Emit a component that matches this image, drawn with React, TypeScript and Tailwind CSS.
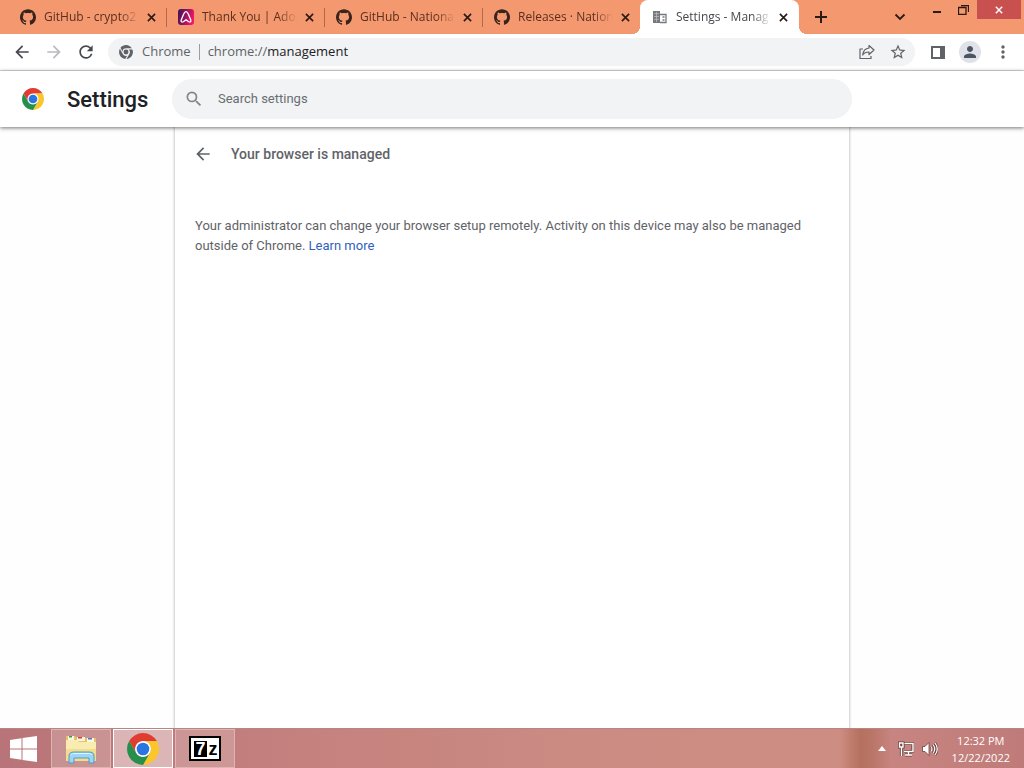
import type { ReactNode } from "react";
import {
  MdArrowBack,
  MdArrowForward,
  MdMoreVert,
  MdPerson,
  MdRefresh,
  MdSearch,
  MdStarBorder,
} from "react-icons/md";
import { SiGithub } from "react-icons/si";

type TabType = {
  title: string;
  icon: ReactNode;
  active?: boolean;
};

const ChromeLogo = ({ className }: { className: string }) => (
  <svg viewBox="0 0 48 48" className={className} aria-hidden="true">
    <circle cx="24" cy="24" r="12" fill="#fff" />
    <path
      fill="#e03c31"
      d="M24 12H44.78a24 24 0 0 0-41.56 0L13.61 30A12 12 0 0 1 24 12Z"
    />
    <path
      fill="#fbc62c"
      d="M34.39 30 24 48A24 24 0 0 0 44.78 12H24A12 12 0 0 1 34.39 30Z"
    />
    <path
      fill="#26904a"
      d="M13.61 30 3.22 12A24 24 0 0 0 24 48L34.39 30a12 12 0 0 1-20.78 0Z"
    />
    <circle cx="24" cy="24" r="9.5" fill="#2a74e4" />
  </svg>
);

const ChromeMonoLogo = () => (
  <svg
    viewBox="0 0 48 48"
    className="size-[14px] shrink-0"
    fill="#5f6368"
    aria-hidden="true"
  >
    <path d="M24 11H44A24 24 0 0 0 5 9.500L12 22A12.500 12.500 0 0 1 24 11Z" />
    <path d="M34 33 25.500 48A24 24 0 0 0 46 15H33A13 13 0 0 1 34 33Z" />
    <path d="M13 31 3 13A24 24 0 0 0 21 48L28 36.500A13 13 0 0 1 13 31Z" />
    <circle cx="24" cy="24" r="8.500" />
  </svg>
);

const AdoptiumIcon = () => (
  <svg viewBox="0 0 16 16" className="size-4" aria-hidden="true">
    <defs>
      <linearGradient id="adoptium" x1="0" y1="0" x2="1" y2="0.3">
        <stop offset="0" stopColor="#3c1150" />
        <stop offset="0.6" stopColor="#9c1560" />
        <stop offset="1" stopColor="#f01568" />
      </linearGradient>
    </defs>
    <rect width="16" height="16" rx="3" fill="url(#adoptium)" />
    <path
      d="M8 2.600c-1.300 0-1.700.9-2.200 2.200L3.200 11c-.6 1.600.7 2.600 2 1.800L8 10.900l2.800 1.900c1.300.8 2.600-.2 2-1.800l-2.600-6.200C9.700 3.500 9.300 2.600 8 2.600Z"
      fill="none"
      stroke="#fff"
      strokeWidth="1.300"
    />
  </svg>
);

const BuildingIcon = () => (
  <svg viewBox="0 0 16 16" className="size-4" aria-hidden="true">
    <path fill="#75787c" d="M1 2h7v12H1z" />
    <path
      d="M8 5.500h6v8H8M10.500 8h2M10.500 11h2"
      fill="none"
      stroke="#75787c"
      strokeWidth="1.300"
    />
    <path
      d="M2 4.700h5M2 7.500h5M2 10.300h5M4.500 3v10"
      stroke="#b9bbbe"
      strokeWidth="0.800"
    />
  </svg>
);

const CloseIcon = ({ className }: { className: string }) => (
  <svg viewBox="0 0 10 10" className={className} aria-hidden="true">
    <path d="M1 1 9 9M9 1 1 9" stroke="currentColor" strokeWidth="1.800" />
  </svg>
);

const tabs: TabType[] = [
  {
    title: "GitHub - crypto2",
    icon: <SiGithub className="size-4 text-[#3a231b]" />,
  },
  { title: "Thank You | Adop", icon: <AdoptiumIcon /> },
  {
    title: "GitHub - National",
    icon: <SiGithub className="size-4 text-[#3a231b]" />,
  },
  {
    title: "Releases · Nation",
    icon: <SiGithub className="size-4 text-[#3a231b]" />,
  },
  {
    title: "Settings - Manag",
    icon: <BuildingIcon />,
    active: true,
  },
];

const Tab = ({ tab, divider }: { tab: TabType; divider: boolean }) => (
  <div
    className={
      tab.active
        ? "relative flex h-full w-[159px] min-w-0 items-center rounded-t-lg bg-white pl-3 text-[#45484c] before:absolute before:bottom-0 before:-left-2 before:size-2 before:bg-[radial-gradient(circle_at_0_0,transparent_8px,white_8px)] after:absolute after:-right-2 after:bottom-0 after:size-2 after:bg-[radial-gradient(circle_at_100%_0,transparent_8px,white_8px)]"
        : "relative flex h-full w-[158px] min-w-0 items-center pl-3 text-[#5a2f1d]"
    }
  >
    <button
      role="tab"
      aria-selected={!!tab.active}
      className="flex min-w-0 items-center gap-2"
    >
      <span className="shrink-0">{tab.icon}</span>
      <span className="w-[95px] overflow-hidden text-left text-xs whitespace-nowrap [mask-image:linear-gradient(to_right,black_80%,transparent)]">
        {tab.title}
      </span>
    </button>
    <button
      aria-label={`Close ${tab.title}`}
      className="ml-1 flex size-4 shrink-0 items-center justify-center text-[#2b1a14]"
    >
      <CloseIcon className="size-[9px]" />
    </button>
    {divider && (
      <span className="absolute top-2 -right-px h-[19px] w-px bg-[#b0694b]" />
    )}
  </div>
);

const TabStrip = () => (
  <div className="flex h-[34px] shrink-0 bg-[#f49870] pl-2">
    <div role="tablist" className="flex min-w-0">
      {tabs.map((tab, index) => (
        <Tab tab={tab} divider={index < 3} key={`tab-${index}`} />
      ))}
    </div>
    <button
      aria-label="New tab"
      className="ml-2 flex w-7 items-center justify-center text-[#2b1a14]"
    >
      <svg viewBox="0 0 12 12" className="size-3" aria-hidden="true">
        <path d="M6 0V12M0 6H12" stroke="currentColor" strokeWidth="2" />
      </svg>
    </button>
    <div className="ml-auto flex items-start text-[#2b1a14]">
      <button
        aria-label="Search tabs"
        className="mr-2.5 flex h-[34px] w-7 items-center justify-center"
      >
        <svg viewBox="0 0 12 8" className="h-2 w-3" aria-hidden="true">
          <path
            d="M1.500 1.500 6 6l4.500-4.500"
            fill="none"
            stroke="currentColor"
            strokeWidth="1.800"
          />
        </svg>
      </button>
      <button
        aria-label="Minimize"
        className="flex h-[19px] w-[26px] items-end justify-center pb-1.5"
      >
        <span className="h-0.5 w-2 bg-[#2b1a14]" />
      </button>
      <button
        aria-label="Restore"
        className="flex h-[19px] w-[26px] items-center justify-center"
      >
        <svg viewBox="0 0 11 10" className="h-2.5 w-[11px]" aria-hidden="true">
          <path
            d="M.5 2.500h7.500v7H.5zM3 .5h7.500V7"
            fill="none"
            stroke="currentColor"
            strokeWidth="1.300"
          />
        </svg>
      </button>
      <button
        aria-label="Close"
        className="ml-px mr-[3px] flex h-[19px] w-11 items-center justify-center bg-[#c8504f] text-white"
      >
        <CloseIcon className="size-2" />
      </button>
    </div>
  </div>
);

const Toolbar = () => (
  <div className="flex h-[37px] shrink-0 items-center border-b border-[#dadada] bg-white px-3 text-[#5f6368]">
    <button aria-label="Back" className="text-[#45484c]">
      <MdArrowBack className="size-5" />
    </button>
    <button aria-label="Forward" className="ml-3 text-[#b9bbbe]">
      <MdArrowForward className="size-5" />
    </button>
    <button aria-label="Reload" className="ml-3 text-[#45484c]">
      <MdRefresh className="size-5" />
    </button>
    <div className="ml-3 flex h-7 min-w-0 flex-1 items-center rounded-full bg-[#f1f3f4] pr-2 pl-[11px] text-[13px]">
      <ChromeMonoLogo />
      <span className="ml-[9px]">Chrome</span>
      <span className="mx-2 h-4 w-px bg-[#9a9da1]" />
      <label htmlFor="address">chrome://</label>
      <input
        id="address"
        defaultValue="management"
        className="min-w-0 flex-1 bg-transparent text-[#202124] outline-none"
      />
      <button aria-label="Share this page" className="shrink-0">
        <svg viewBox="0 0 16 16" className="size-4" aria-hidden="true">
          <path
            d="M4 5H1v9.500h11V12M10 1.500 15 6l-5 4.500V8C7 8 5 9 3.700 11 4 7.500 6 4.500 10 4Z"
            fill="none"
            stroke="currentColor"
            strokeWidth="1.200"
            strokeLinejoin="round"
          />
        </svg>
      </button>
      <button aria-label="Bookmark this tab" className="ml-3.5 shrink-0">
        <MdStarBorder className="size-[18px]" />
      </button>
    </div>
    <button aria-label="Side panel" className="ml-4">
      <svg viewBox="0 0 14 13" className="h-[13px] w-[14px]" aria-hidden="true">
        <path
          fill="currentColor"
          fillRule="evenodd"
          d="M0 0h14v13H0zM2 2v9h7V2z"
        />
      </svg>
    </button>
    <button
      aria-label="Profile"
      className="ml-3.5 flex size-[22px] items-center justify-center rounded-full bg-[#dfe2e8] text-[#4c5564]"
    >
      <MdPerson className="size-[18px]" />
    </button>
    <button aria-label="Menu" className="-mr-px ml-3">
      <MdMoreVert className="size-5" />
    </button>
  </div>
);

const SettingsHeader = () => (
  <header className="z-10 flex h-14 shrink-0 items-center bg-white font-[Roboto,sans-serif] shadow-[0_1px_4px_rgba(0,0,0,0.55)]">
    <div className="flex flex-1 items-center">
      <ChromeLogo className="ml-[22px] size-[22px] shrink-0" />
      <h1 className="ml-[23px] text-[22px] font-medium text-[#202124]">
        Settings
      </h1>
    </div>
    <div className="flex h-10 w-[680px] items-center rounded-full bg-[#f1f3f4] px-3 text-[#5f6368]">
      <MdSearch className="size-5 shrink-0 text-[#80868b]" />
      <input
        type="search"
        aria-label="Search settings"
        placeholder="Search settings"
        className="ml-3.5 min-w-0 flex-1 bg-transparent text-[13px] outline-none placeholder:text-[#6a6e73]"
      />
    </div>
    <div className="flex-1" />
  </header>
);

const ManagedPage = () => (
  <main className="flex min-h-0 flex-1 justify-center bg-[#fefefe] font-[Roboto,sans-serif] text-[#5f6368]">
    <section className="w-full max-w-[674px] bg-white px-5 pt-4 shadow-[0_0_2px_1px_rgba(0,0,0,0.2)]">
      <div className="flex h-[22px] items-center">
        <button aria-label="Go back" className="-ml-0.5">
          <MdArrowBack className="size-5" />
        </button>
        <h2 className="ml-[18px] text-sm font-medium">
          Your browser is managed
        </h2>
      </div>
      <p className="mt-[51px] text-[13px] leading-5">
        Your administrator can change your browser setup remotely. Activity on
        this device may also be managed outside of Chrome.{" "}
        <a href="#learn-more" className="text-[#2f5fbf]">
          Learn more
        </a>
      </p>
    </section>
  </main>
);

const FolderIcon = () => (
  <svg viewBox="0 0 32 30" className="h-[30px] w-8" aria-hidden="true">
    <path d="M1 2h9l2 2h19v23H1z" fill="#e3c268" />
    <path d="M3 2h6v5H3zM12 3h8v4h-8zM22 4h7v4h-7z" fill="#fbf6e4" />
    <path d="M4 2h3v1.500H4z" fill="#3b9a48" />
    <path d="M13 3h4v1.500h-4z" fill="#d2452e" />
    <path d="M23 4h4v1.500h-4z" fill="#4a7fc0" />
    <path d="M1 6h11l2 2h17v19H1z" fill="#f9ecb0" />
    <path d="M1 15h30v12H1z" fill="#f2dd8c" />
    <path
      d="M4 29v-7c0-3 2-4 5-4h15c3 0 5 1 5 4v7h-5v-5H9v5z"
      fill="#9dd5f3"
      stroke="#4c9ccb"
    />
    <path d="M6 21c1-1.500 2-1.500 4-1.500h13c2 0 3 0 4 1.500" fill="none" stroke="#e0f5ff" />
  </svg>
);

const SevenZipIcon = () => (
  <span className="flex h-[25px] w-8 border-2 border-black bg-white pt-[3px] pb-0.5 pl-[3px] font-['Liberation_Sans',sans-serif] text-lg font-bold">
    <span className="flex w-[13px] items-center justify-center bg-black leading-none text-white">
      7
    </span>
    <span className="flex flex-1 items-center justify-center leading-none text-black">
      z
    </span>
  </span>
);

const Taskbar = () => (
  <footer className="flex h-10 shrink-0 items-stretch border-t border-[#b58784] bg-[linear-gradient(to_right,#b87478_0%,#c5817e_30%,#cc8c83_60%,#cd8d82_82%,#b5705f_84%,#b87465_85%,#c78480_87%,#bf7b79_100%)] text-white">
    <button aria-label="Start" className="flex w-[51px] items-center pl-2.5">
      <svg viewBox="0 0 28 26" className="h-[26px] w-7" aria-hidden="true">
        <path
          fill="#fff"
          d="M0 4 11.500 2.300V12.500H0zM12.500 2.100 27 0V12.500H12.500zM0 13.500H11.500V23.700L0 22zM12.500 13.500H27V26L12.500 23.900z"
        />
      </svg>
    </button>
    <div className="flex gap-0.5">
      <button
        aria-label="File Explorer"
        className="flex w-[60px] items-center justify-center border border-[#dfb4b1] bg-white/20"
      >
        <FolderIcon />
      </button>
      <button
        aria-label="Google Chrome"
        className="flex w-[60px] items-center justify-center border border-white bg-white/45"
      >
        <ChromeLogo className="size-8" />
      </button>
      <button
        aria-label="7-Zip"
        className="flex w-[60px] items-center justify-center border border-[#dfb4b1] bg-white/20"
      >
        <SevenZipIcon />
      </button>
    </div>
    <div className="ml-auto flex items-center pr-3.5">
      <button aria-label="Show hidden icons">
        <svg viewBox="0 0 8 5" className="h-[5px] w-2" aria-hidden="true">
          <path d="M4 0 8 5H0z" fill="#fff" />
        </svg>
      </button>
      <button aria-label="Network" className="ml-3">
        <svg viewBox="0 0 16 16" className="size-4" aria-hidden="true">
          <g fill="none" stroke="#6b403d" strokeWidth="3.200">
            <path d="M6.500 2.500h8.500v8H6M10.500 11v3M7 14h7M1.500 2h3.500v4H1.500zM3.500 6v9" />
          </g>
          <g fill="none" stroke="#fff" strokeWidth="1.400">
            <path d="M6.500 2.500h8.500v8H6M10.500 11v3M7 14h7M1.500 2h3.500v4H1.500zM3.500 6v9" />
          </g>
        </svg>
      </button>
      <button aria-label="Volume" className="ml-2">
        <svg viewBox="0 0 16 16" className="size-4" aria-hidden="true">
          <path
            d="M.5 5.500H3L7 1.500v13L3 10.500H.5z"
            fill="#fff"
            stroke="#6b403d"
            strokeWidth="0.800"
          />
          <g fill="none" stroke="#6b403d" strokeWidth="2.400">
            <path d="M9 5.500q2 2.500 0 5M11 3.500q3.500 4.500 0 9M13 2q4.500 6 0 12" />
          </g>
          <g fill="none" stroke="#fff" strokeWidth="1.200">
            <path d="M9 5.500q2 2.500 0 5M11 3.500q3.500 4.500 0 9M13 2q4.500 6 0 12" />
          </g>
        </svg>
      </button>
      <time
        dateTime="2022-12-22T12:32"
        className="ml-3.5 flex flex-col text-center text-[11px] leading-[17px]"
      >
        <span>12:32 PM</span>
        <span>12/22/2022</span>
      </time>
    </div>
  </footer>
);

const App = () => {
  return (
    <div className="flex h-screen flex-col overflow-hidden bg-white font-['Open_Sans','Noto_Sans',sans-serif]">
      <TabStrip />
      <Toolbar />
      <SettingsHeader />
      <ManagedPage />
      <Taskbar />
    </div>
  );
};

export default App;
